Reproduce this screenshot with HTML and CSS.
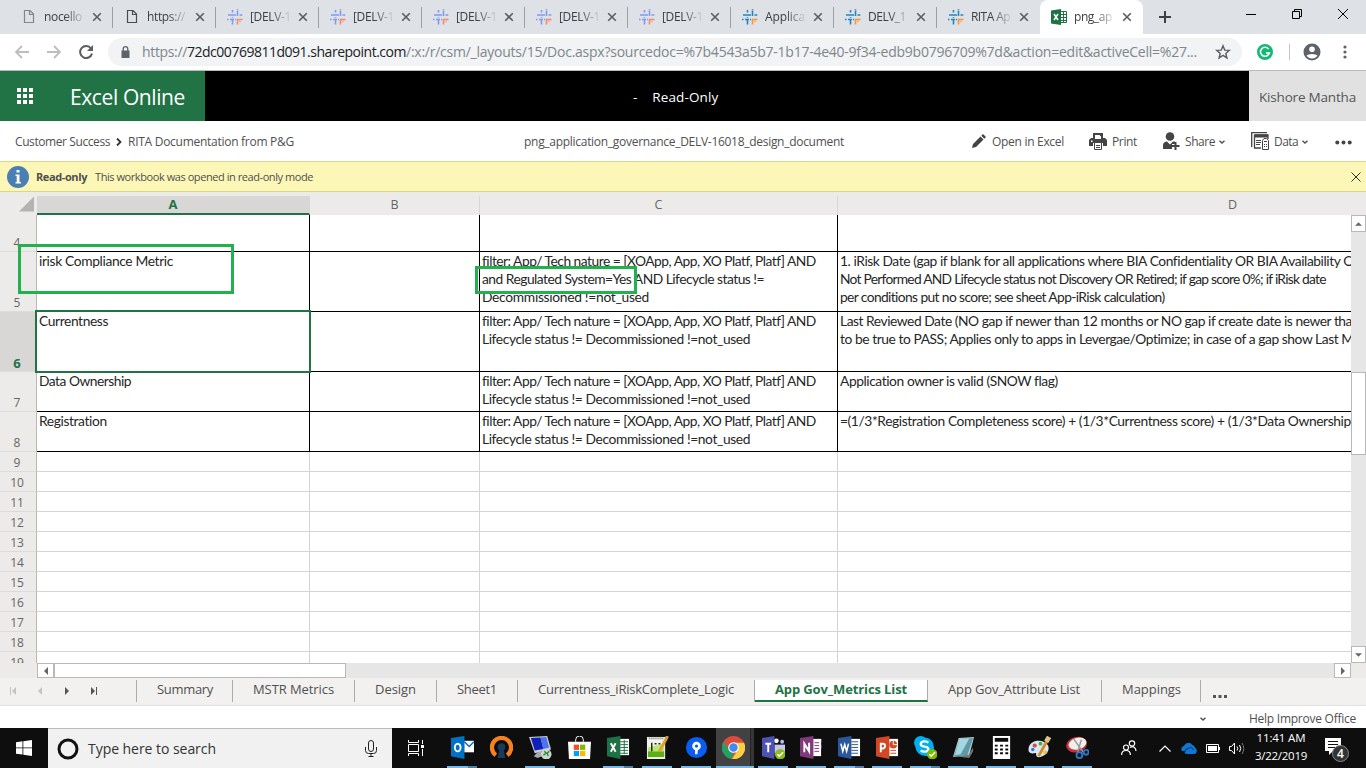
FILE: index.html
```html
<!DOCTYPE html>
<html lang="en">
<head>
<meta charset="utf-8">
<title>Excel Online</title>
<link rel="stylesheet" href="styles.css">
</head>
<body>
<svg class="defs" aria-hidden="true">
  <symbol id="page" viewBox="0 0 14 16"><path d="M2.500 1.500h5.500l3.500 3.500v8.500h-9zM7.500 1.500v4h4" fill="none" stroke="currentColor" stroke-width="1.200"/></symbol>
  <symbol id="hash" viewBox="0 0 16 16"><g fill="none" stroke="currentColor" stroke-width="1.600"><path d="M5.500 1v2.500M1 6h8M10.500 1.500v5.500M12.500 6h2.800M10.500 0v.8M0 10.500h1.500M3 10.500h4M5.500 10v5.500M8 10.500h1M5.500 8v.8"/><path d="M10.500 15.500v-5H15.500M12.500 12.500h1" class="accent"/></g></symbol>
  <symbol id="x" viewBox="0 0 10 10"><path d="M1.200 1.200l7.600 7.600M8.800 1.200L1.200 8.800" fill="none" stroke="currentColor" stroke-width="1.600"/></symbol>
  <symbol id="thinx" viewBox="0 0 10 10"><path d="M.5.5l9 9M9.500.5l-9 9" fill="none" stroke="currentColor" stroke-width="1"/></symbol>
  <symbol id="chev" viewBox="0 0 6 4"><path d="M.5.700L3 3 5.500.700" fill="none" stroke="currentColor" stroke-width="1.400"/></symbol>
  <symbol id="tri" viewBox="0 0 4 8"><path d="M0 0l4 4-4 4z" fill="currentColor"/></symbol>
</svg>

<div class="tabstrip">
  <div class="tab"><svg class="fav grey"><use href="#page"/></svg><span class="title"><span class="fit" data-w="38">nocello</span></span><svg class="close"><use href="#x"/></svg></div>
  <div class="tab"><svg class="fav grey dark"><use href="#page"/></svg><span class="title"><span class="fit" data-w="38">https://</span></span><svg class="close"><use href="#x"/></svg></div>
  <div class="tab"><svg class="fav pale"><use href="#hash"/></svg><span class="title"><span class="fit" data-w="41">[DELV-1</span></span><svg class="close"><use href="#x"/></svg></div>
  <div class="tab"><svg class="fav pale"><use href="#hash"/></svg><span class="title"><span class="fit" data-w="41">[DELV-1</span></span><svg class="close"><use href="#x"/></svg></div>
  <div class="tab"><svg class="fav pale"><use href="#hash"/></svg><span class="title"><span class="fit" data-w="41">[DELV-1</span></span><svg class="close"><use href="#x"/></svg></div>
  <div class="tab"><svg class="fav pale"><use href="#hash"/></svg><span class="title"><span class="fit" data-w="41">[DELV-1</span></span><svg class="close"><use href="#x"/></svg></div>
  <div class="tab"><svg class="fav pale"><use href="#hash"/></svg><span class="title"><span class="fit" data-w="41">[DELV-1</span></span><svg class="close"><use href="#x"/></svg></div>
  <div class="tab"><svg class="fav vivid"><use href="#hash"/></svg><span class="title"><span class="fit" data-w="40">Applica</span></span><svg class="close"><use href="#x"/></svg></div>
  <div class="tab"><svg class="fav vivid"><use href="#hash"/></svg><span class="title"><span class="fit" data-w="38">DELV_1</span></span><svg class="close"><use href="#x"/></svg></div>
  <div class="tab last"><svg class="fav vivid"><use href="#hash"/></svg><span class="title"><span class="fit" data-w="39">RITA Ap</span></span><svg class="close"><use href="#x"/></svg></div>
  <div class="tab active"><svg class="fav" viewBox="0 0 16 16"><path fill="#1f7244" d="M0 1.500L10 0v16L0 14.500z"/><path fill="none" stroke="#1f7244" d="M10 2.500h5.500v11H10M10 5.500h5M10 8.500h5M10 11.500h5M12.500 3v10"/><path d="M3 5l4 6M7 5l-4 6" stroke="#fff" stroke-width="1.500"/></svg><span class="title"><span class="fit" data-w="38">png_ap</span></span><svg class="close"><use href="#x"/></svg></div>
  <svg class="plus" viewBox="0 0 12 12"><path d="M6 0v12M0 6h12" stroke="#3c4043" stroke-width="2"/></svg>
  <div class="winbtns">
    <svg viewBox="0 0 10 10"><path d="M0 5.500h10" stroke="#000"/></svg>
    <svg viewBox="0 0 10 10"><path d="M.5 2.500h7v7h-7zM2.500 2.500v-2h7v7h-2" fill="none" stroke="#000"/></svg>
    <svg viewBox="0 0 10 10"><path d="M0 0l10 10M10 0L0 10" stroke="#000"/></svg>
  </div>
</div>

<div class="toolbar">
  <svg class="nav" viewBox="0 0 14 14"><path d="M14 7H1.500M7 1L1 7l6 6" fill="none" stroke="#bdbdbd" stroke-width="1.800"/></svg>
  <svg class="nav" viewBox="0 0 14 14"><path d="M0 7h12.500M7 1l6 6-6 6" fill="none" stroke="#bdbdbd" stroke-width="1.800"/></svg>
  <svg class="nav" viewBox="0 0 14 14"><path d="M12 3.500A6 6 0 1 0 13 8.500" fill="none" stroke="#5a5d61" stroke-width="2"/><path d="M14 0v6H8z" fill="#5a5d61"/></svg>
  <div class="omnibox">
    <svg class="lock" viewBox="0 0 9 12"><path d="M.5 4.500h8V12h-8z" fill="#5f6368"/><path d="M2.200 5V3a2.300 2.300 0 0 1 4.600 0v2" fill="none" stroke="#5f6368" stroke-width="1.300"/></svg>
    <span class="url"><span class="fit" data-w="45">https://</span><span class="fit host" data-w="219">72dc00769811d091.sharepoint.com</span><span class="fit" data-w="791">/:x:/r/csm/_layouts/15/Doc.aspx?sourcedoc=%7b4543a5b7-1b17-4e40-9f34-edb9b0796709%7d&amp;action=edit&amp;activeCell=%27...</span></span>
    <svg class="star" viewBox="0 0 16 16"><path d="M8 1.800l1.700 4.300 4.600.3-3.500 3 1.100 4.500L8 11.400l-3.900 2.500 1.100-4.500-3.500-3 4.600-.3z" fill="none" stroke="#5a5d61" stroke-width="1.400"/></svg>
  </div>
  <svg class="gram" viewBox="0 0 16 16"><circle cx="8" cy="8" r="8" fill="#15b877"/><path d="M11.500 5A4.500 4.500 0 1 0 12.300 9H9" fill="none" stroke="#fff" stroke-width="1.600"/></svg>
  <i class="bar"></i>
  <svg class="user" viewBox="0 0 18 18"><circle cx="9" cy="9" r="8.500" fill="#5f6368"/><circle cx="9" cy="6.300" r="2.800" fill="#fff"/><path d="M3.500 12.500a6.500 3.300 0 0 1 11 0 6.500 6.500 0 0 1-11 0" fill="#fff"/></svg>
  <svg class="more" viewBox="0 0 4 14"><g fill="#5f6368"><circle cx="2" cy="2" r="1.600"/><circle cx="2" cy="7" r="1.600"/><circle cx="2" cy="12" r="1.600"/></g></svg>
</div>

<header class="apphead">
  <div class="brand"><svg viewBox="0 0 16 16"><path fill="#fff" d="M0 0h4v4H0zM6 0h4v4H6zM12 0h4v4h-4zM0 6h4v4H0zM6 6h4v4H6zM12 6h4v4h-4zM0 12h4v4H0zM6 12h4v4H6zM12 12h4v4h-4z"/></svg><span class="fit" data-w="115">Excel Online</span></div>
  <div class="mode"><span>-</span><span class="fit" data-w="66">Read-Only</span></div>
  <div class="account"><span class="fit" data-w="97">Kishore Mantha</span></div>
</header>

<div class="cmdbar">
  <div class="crumbs"><span class="fit" data-w="95">Customer Success</span><svg viewBox="0 0 6 8"><path d="M1 .5L4.500 4 1 7.500" fill="none" stroke="#333" stroke-width="1.800"/></svg><span class="fit" data-w="166">RITA Documentation from P&amp;G</span></div>
  <div class="doc"><span class="fit" data-w="320">png_application_governance_DELV-16018_design_document</span></div>
  <div class="actions">
    <svg class="pencil" viewBox="0 0 14 14"><path fill="#444" d="M0 14l1-4 7.500-7.500 3 3L4 13zM9.300 1.700L11 0l3 3-1.700 1.700z"/></svg><span class="fit open" data-w="72">Open in Excel</span>
    <svg class="print" viewBox="0 0 18 17"><path fill="#444" d="M4 0h10v5h2l2 2v6h-4v-3H4v3H0V7l2-2h2z"/><path fill="#fff" d="M6 2h5v1h1v3H6zM2 7.500h1.500V9H2z"/><path d="M5.500 9.500h7v7h-7zM7 12.500h4M7 14.500h4" fill="#fff" stroke="#444"/></svg><span class="fit" data-w="25">Print</span>
    <svg class="share" viewBox="0 0 17 18"><circle cx="7" cy="4.500" r="4.300" fill="#444"/><path fill="#444" d="M0 17v-4c0-2 2-3.500 4-3.500l3 3 3-3h2V12H9v5z"/><path d="M12.500 10v8M8.500 14h8" stroke="#444" stroke-width="2"/></svg><span class="fit" data-w="30">Share</span><svg class="chev"><use href="#chev"/></svg>
    <svg class="data" viewBox="0 0 18 18"><path d="M.7 15V.7H16M3.500 3v13H10M3.500 3H17v4" fill="none" stroke="#444" stroke-width="1.300"/><path fill="#444" d="M3 2.500h14v3H3z"/><path d="M5 8.500h5M5 10.500h5M5 12.500h4" stroke="#444"/><path d="M11.500 8.500l1.500-2h2.500l2 2v9h-6z" fill="#fff" stroke="#444"/><path d="M13 9.500h3M13 12.500h1M15 12.500h1M13 14.500h1M15 14.500h1" stroke="#444"/></svg><span class="fit" data-w="24">Data</span><svg class="chev"><use href="#chev"/></svg>
    <svg class="dots" viewBox="0 0 17 5"><g fill="#444"><circle cx="2.300" cy="2.500" r="2"/><circle cx="8.500" cy="2.500" r="2"/><circle cx="14.700" cy="2.500" r="2"/></g></svg>
  </div>
</div>

<div class="notice">
  <svg class="info" viewBox="0 0 22 22"><circle cx="11" cy="11" r="11" fill="#4a7fb5"/><path fill="#fff" d="M9.500 4h3v2.500h-3zM8.500 8.500h4V16H14v1.500H8.500V16h1.200v-6H8.500z"/></svg>
  <b class="fit" data-w="51">Read-only</b><span class="fit" data-w="218">This workbook was opened in read-only mode</span>
  <svg class="dismiss"><use href="#thinx"/></svg>
</div>

<main class="sheet">
  <div class="colhead">
    <div class="corner"><svg viewBox="0 0 16 16"><path d="M16 0v16H0z" fill="#b3b3b3"/></svg></div>
    <div class="c sel">A</div><div class="c b">B</div><div class="c cc">C</div><div class="c d">D</div>
  </div>
  <div class="body">
    <div class="rows">
      <div class="row r4 ink"><div class="n">4</div><div></div><div></div><div></div><div></div></div>
      <div class="row r60 ink"><div class="n">5</div><div><p class="fit" data-w="134">irisk Compliance Metric</p></div><div></div><div><p class="fit" data-w="333">filter: App/ Tech nature = [XOApp, App, XO Platf, Platf] AND</p><p class="fit" data-w="282">and Regulated System=Yes AND Lifecycle status !=</p><p class="fit" data-w="167">Decommissioned !=not_used</p></div><div><p class="fit" data-w="514">1. iRisk Date (gap if blank for all applications where BIA Confidentiality OR BIA Availability O</p><p class="fit" data-w="486">Not Performed AND Lifecycle status not Discovery OR Retired; if gap score 0%; if iRisk date</p><p class="fit" data-w="325">per conditions put no score; see sheet App-iRisk calculation)</p></div></div>
      <div class="row r60 ink cur"><div class="n">6</div><div class="cell"><p class="fit" data-w="69">Currentness</p></div><div></div><div><p class="fit" data-w="333">filter: App/ Tech nature = [XOApp, App, XO Platf, Platf] AND</p><p class="fit" data-w="268">Lifecycle status != Decommissioned !=not_used</p></div><div><p class="fit" data-w="512">Last Reviewed Date (NO gap if newer than 12 months or NO gap if create date is newer tha</p><p class="fit" data-w="514">to be true to PASS; Applies only to apps in Levergae/Optimize; in case of a gap show Last M</p></div></div>
      <div class="row r40 ink"><div class="n">7</div><div><p class="fit" data-w="92">Data Ownership</p></div><div></div><div><p class="fit" data-w="333">filter: App/ Tech nature = [XOApp, App, XO Platf, Platf] AND</p><p class="fit" data-w="268">Lifecycle status != Decommissioned !=not_used</p></div><div><p class="fit" data-w="218">Application owner is valid (SNOW flag)</p></div></div>
      <div class="row r40 ink"><div class="n">8</div><div><p class="fit" data-w="68">Registration</p></div><div></div><div><p class="fit" data-w="333">filter: App/ Tech nature = [XOApp, App, XO Platf, Platf] AND</p><p class="fit" data-w="268">Lifecycle status != Decommissioned !=not_used</p></div><div><p class="fit" data-w="511">=(1/3*Registration Completeness score) + (1/3*Currentness score) + (1/3*Data Ownership</p></div></div>
      <div class="row"><div class="n">9</div><div></div><div></div><div></div><div></div></div>
      <div class="row"><div class="n">10</div><div></div><div></div><div></div><div></div></div>
      <div class="row"><div class="n">11</div><div></div><div></div><div></div><div></div></div>
      <div class="row"><div class="n">12</div><div></div><div></div><div></div><div></div></div>
      <div class="row"><div class="n">13</div><div></div><div></div><div></div><div></div></div>
      <div class="row"><div class="n">14</div><div></div><div></div><div></div><div></div></div>
      <div class="row"><div class="n">15</div><div></div><div></div><div></div><div></div></div>
      <div class="row"><div class="n">16</div><div></div><div></div><div></div><div></div></div>
      <div class="row"><div class="n">17</div><div></div><div></div><div></div><div></div></div>
      <div class="row"><div class="n">18</div><div></div><div></div><div></div><div></div></div>
      <div class="row"><div class="n">19</div><div></div><div></div><div></div><div></div></div>
    </div>
    <div class="vscroll"><div class="btn"><svg viewBox="0 0 8 4"><path d="M0 4l4-4 4 4z" fill="#666"/></svg></div><div class="thumb"></div><div class="btn end"><svg viewBox="0 0 8 4"><path d="M0 0l4 4 4-4z" fill="#666"/></svg></div></div>
    <div class="mark one"></div><div class="mark two"></div>
  </div>
  <div class="hscroll"><div class="hbtn"><svg class="flip"><use href="#tri"/></svg></div><div class="hthumb"></div><div class="hbtn end"><svg><use href="#tri"/></svg></div></div>
</main>

<nav class="sheettabs">
  <div class="steps"><svg class="off" viewBox="0 0 6 8"><path d="M.5 0v8" stroke="currentColor"/><path d="M6 0L2 4l4 4z" fill="currentColor"/></svg><svg class="off" viewBox="0 0 6 8"><path d="M5 0L1 4l4 4z" fill="currentColor"/></svg><svg viewBox="0 0 6 8"><path d="M1 0l4 4-4 4z" fill="currentColor"/></svg><svg viewBox="0 0 6 8"><path d="M5.500 0v8" stroke="currentColor"/><path d="M0 0l4 4-4 4z" fill="currentColor"/></svg></div>
  <div class="st w1"><span class="fit" data-w="56">Summary</span></div>
  <div class="st w2"><span class="fit" data-w="81">MSTR Metrics</span></div>
  <div class="st w3"><span class="fit" data-w="41">Design</span></div>
  <div class="st w4"><span class="fit" data-w="40">Sheet1</span></div>
  <div class="st w5"><span class="fit" data-w="196">Currentness_iRiskComplete_Logic</span></div>
  <div class="st w6 on"><span class="fit" data-w="132">App Gov_Metrics List</span></div>
  <div class="st w7"><span class="fit" data-w="132">App Gov_Attribute List</span></div>
  <div class="st w8"><span class="fit" data-w="59">Mappings</span></div>
  <svg class="ell" viewBox="0 0 14 3"><path d="M0 0h3v3H0zM5.500 0h3v3h-3zM11 0h3v3h-3z" fill="#555"/></svg>
</nav>
<footer class="status"><svg class="chev"><use href="#chev"/></svg><span class="fit" data-w="107">Help Improve Office</span></footer>

<div class="taskbar">
  <div class="start"><svg viewBox="0 0 16 16"><path fill="#fff" d="M0 2.200l6.500-.9v6.200H0zM7.300 1.200L16 0v7.500H7.300zM0 8.300h6.500v6.300L0 13.700zM7.300 8.300H16V16l-8.700-1.200z"/></svg></div>
  <div class="search"><svg class="cortana" viewBox="0 0 22 22"><circle cx="11" cy="11" r="9" fill="none" stroke="#111" stroke-width="3"/></svg><span class="fit" data-w="128">Type here to search</span><svg class="mic" viewBox="0 0 12 17"><rect x="3.500" y=".5" width="5" height="11" rx="2.500" fill="none" stroke="#222"/><path d="M.5 7v3.500a3 3 0 0 0 3 3h5a3 3 0 0 0 3-3V7M6 13.500v3M3.500 16.500h5" fill="none" stroke="#222"/></svg></div>
  <div class="tv"><svg viewBox="0 0 16 16"><path d="M.5 0v2.500h10V0M.5 16v-2.500h10V16M.5 4.500h10v7H.5zM14.500 0v4M14.500 9v7" fill="none" stroke="#fff"/><path fill="#fff" d="M13 5h3v3h-3z"/></svg></div>
  <div class="app run split"><svg viewBox="0 0 24 24"><path fill="#0072c6" d="M0 2l14-2v24L0 21z"/><path fill="#fff" d="M14 5h10v12H14z"/><path d="M14 6l5 5 5-5" stroke="#0072c6" fill="none" stroke-width="1.500"/><ellipse cx="7" cy="12" rx="3" ry="4" fill="none" stroke="#fff" stroke-width="2"/></svg></div>
  <div class="app"><svg viewBox="0 0 24 24"><path d="M6 20A10 10 0 1 1 18 20" fill="none" stroke="#f6821f" stroke-width="4.500"/><circle cx="12" cy="11.500" r="4" fill="#1a3a5c"/><path fill="#1a3a5c" d="M10 13h4l2 10H8z"/></svg></div>
  <div class="app run"><svg viewBox="0 0 24 24"><path fill="#c9cdd5" d="M0 1l19-1 4 14-17 4z"/><path fill="#1020b8" d="M2 2l10-.5 3 12L6 15z"/><path fill="#4b73ee" d="M12 1.500l6-.5 3 11-6 1.500z"/><path fill="#aaa" d="M9 17l6-1 1 4-7 3-4-2z"/><circle cx="18" cy="19" r="5.500" fill="#cdd5cd"/><path d="M15 20l3-2-2-2M21 16l-2 2 1 3" stroke="#26863c" fill="none" stroke-width="1.400"/></svg></div>
  <div class="app"><svg viewBox="0 0 24 24"><path d="M8 6V4a4 4 0 0 1 8 0v2" fill="none" stroke="#fff"/><path fill="#fff" d="M0 6h24l-1 18H1z"/><path fill="#f25022" d="M6 9h5.500v5.500H6z"/><path fill="#7fba00" d="M12.500 9H18v5.500h-5.500z"/><path fill="#00a4ef" d="M6 15.500h5.500V21H6z"/><path fill="#ffb900" d="M12.500 15.500H18V21h-5.500z"/></svg></div>
  <div class="app run split"><svg viewBox="0 0 24 24"><path fill="#fff" d="M12 3h11v17H12z"/><path d="M14 6h8M14 9h8M14 12h8M14 15h8M14 18h8M18 4v15" stroke="#1e7145"/><path fill="#1e7145" d="M0 2l14-2v24L0 21z"/><path d="M4 7.500l5 9M9 7.500l-5 9" stroke="#fff" stroke-width="2"/></svg></div>
  <div class="app run"><svg viewBox="0 0 24 24"><path fill="#f1f3ea" d="M1 1h19v23H1z"/><path fill="#b9e86a" d="M2 12l17-4v8H2z"/><path fill="#5cad18" d="M2 16h17v6H2z"/><path d="M3 2.500h15" stroke="#777" stroke-width="2" stroke-dasharray="1 1"/><path d="M6 7v9M9 8h2M13 8h2" stroke="#222" stroke-width="1.500"/><path d="M14 16l8-15" stroke="#e3a030" stroke-width="3"/><path d="M21 3l1.500-3" stroke="#c94" stroke-width="3"/></svg></div>
  <div class="app run"><svg viewBox="0 0 24 24"><circle cx="12" cy="12" r="11" fill="#0a5df0"/><circle cx="12" cy="10.500" r="4.500" fill="#fff"/><path fill="#fff" d="M10.500 13h3l-.5 6h-2.500z"/><circle cx="12" cy="10.500" r="1.700" fill="#0a5df0"/></svg></div>
  <div class="app run full"><svg viewBox="0 0 24 24"><circle cx="12" cy="12" r="12" fill="#dd4b3e"/><path fill="#1da462" d="M1.500 6L9 17l3 1-1.500 6A12 12 0 0 1 1.500 6"/><path fill="#ffcd42" d="M12 7h11A12 12 0 0 1 10.500 24L16 15z"/><circle cx="12" cy="12" r="5.500" fill="#fff"/><circle cx="12" cy="12" r="4.400" fill="#4688f1"/></svg></div>
  <div class="app run"><svg viewBox="0 0 24 24"><circle cx="15" cy="5" r="2.500" fill="#fff"/><circle cx="21" cy="6" r="2" fill="#bfc1ee"/><path fill="#c5c7f0" d="M13 9h11v9H13z"/><path fill="#4f52b2" d="M0 2l13-2v24L0 21z"/><path d="M3.500 8h6M6.500 8v9" stroke="#fff" stroke-width="2"/><circle cx="19" cy="19" r="5.500" fill="#8cbd18"/><path d="M16 19l2 2 4-4" stroke="#fff" fill="none" stroke-width="1.500"/></svg></div>
  <div class="app run"><svg viewBox="0 0 24 24"><path fill="#fff" d="M12 3h10v18H12z"/><path d="M15 7h5M15 10h5M15 13h5M15 16h5M22.500 3v4M22.500 9v4" stroke="#80397b"/><path fill="#80397b" d="M0 2l14-2v24L0 21z"/><path d="M4.500 17V8l5 8V7" stroke="#fff" fill="none" stroke-width="2"/></svg></div>
  <div class="app run split"><svg viewBox="0 0 24 24"><path fill="#fff" d="M12 3h11v18H12z"/><path d="M14 6h7M14 9h7M14 12h7M14 15h7M14 18h7" stroke="#2b579a"/><path fill="#2b579a" d="M0 2l14-2v24L0 21z"/><path d="M3 8l2 8 2-7 2 7 2-8" stroke="#fff" fill="none" stroke-width="1.600"/></svg></div>
  <div class="app run"><svg viewBox="0 0 24 24"><path fill="#fff" d="M12 3h11v18H12z"/><circle cx="18" cy="9" r="4" fill="#d24726"/><path d="M18 5v4h4" stroke="#fff" fill="none"/><path d="M15 15h6M15 18h6" stroke="#d24726"/><path fill="#d24726" d="M0 2l14-2v24L0 21z"/><path d="M5 17V8h2a2.500 2.500 0 0 1 0 5H5" stroke="#fff" fill="none" stroke-width="2"/></svg></div>
  <div class="app run split"><svg viewBox="0 0 24 24"><circle cx="7" cy="7" r="7" fill="#00aff0"/><circle cx="14" cy="14" r="7" fill="#00aff0"/><circle cx="11" cy="11" r="9.500" fill="#00aff0"/><path d="M15 7c-2-2-8-2-8 1.500C7 12 15 10 15 13.500S9 17 7 15" stroke="#fff" fill="none" stroke-width="2.400"/><circle cx="19" cy="19" r="5.500" fill="#7fba00"/><path d="M16 19l2 2 4-4" stroke="#fff" fill="none" stroke-width="1.500"/></svg></div>
  <div class="app run"><svg viewBox="0 0 24 24"><path fill="#b9ced4" d="M7 2l16-1-5 19-17 2z"/><path fill="#5d9aa8" d="M8 3l14-1-6 18-14 1z"/><path fill="#a6d6df" d="M8 3l10-.5L9 19l-6 1z"/><path fill="#777" d="M2 21l15-1 5-8v4l-4 7z"/></svg></div>
  <div class="app run"><svg viewBox="0 0 24 24"><path fill="#fff" d="M3 0h18v24H3z"/><path fill="#0c0c0c" d="M5 2h14v4H5z"/><path d="M5 10h14M5 14h14M5 18h14" stroke="#0c0c0c" stroke-width="2" stroke-dasharray="3 2.500"/></svg></div>
  <div class="app run"><svg viewBox="0 0 24 24"><path fill="#d8e8f4" d="M1 11C4 3 17 3 21 10c3 8-7 13-11 12-3-2 0-5-3-4-7 1-7-3-6-7"/><circle cx="7" cy="10" r="2.200" fill="#e34a3a"/><circle cx="13" cy="8" r="2" fill="#49a94d"/><circle cx="5" cy="14" r="1.800" fill="#3b74d1"/><circle cx="18" cy="17" r="2" fill="#e9c22c"/><path d="M11 21L20 5" stroke="#d48a2b" stroke-width="3"/><path d="M19 6l3-5" stroke="#dac28a" stroke-width="5"/></svg></div>
  <div class="app run"><svg viewBox="0 0 24 24"><ellipse cx="11" cy="9" rx="11" ry="8" transform="rotate(-15 11 9)" fill="#c5333a"/><ellipse cx="12" cy="8" rx="9.500" ry="6" transform="rotate(-15 12 8)" fill="#f3eeee"/><path d="M8 3l10 14M16 4l-4 13" stroke="#999" stroke-width="1.500"/><circle cx="14" cy="20" r="3" fill="none" stroke="#2e75c8" stroke-width="2"/><circle cx="21" cy="17" r="2.500" fill="none" stroke="#2e75c8" stroke-width="2"/></svg></div>
  <div class="tray">
    <svg class="people" viewBox="0 0 16 16"><g fill="none" stroke="#fff" stroke-width="1.200"><circle cx="5" cy="7.500" r="2.500"/><path d="M.6 15c0-6 8.800-6 8.800 0"/><circle cx="11" cy="3.500" r="2.700"/><path d="M9 7.500c3-2 6 0 6 3.500"/></g></svg>
    <svg class="up" viewBox="0 0 12 7"><path d="M.5 6.500L6 1l5.500 5.500" fill="none" stroke="#fff" stroke-width="1.200"/></svg>
    <svg class="cloud" viewBox="0 0 16 11"><path fill="#0b78d7" d="M1 8c-2-3 1-5 2-5 2-4 7-4 8-1 2 0 3 2 3 3 3 1 2 6-1 6H6C4 11 3 9 4 8z"/><path d="M4 9C4 5 7 6 7 6c2-3 5-1 5 1" fill="none" stroke="#0b1520" stroke-width=".8"/></svg>
    <svg class="batt" viewBox="0 0 15 9"><path d="M.5.5h12v8H.500zM13.500 3v3" fill="none" stroke="#fff"/><path fill="#fff" d="M2 2h9v5H2z"/></svg>
    <svg class="vol" viewBox="0 0 16 13"><path d="M.5 4.500h2l3-3.500v11l-3-3.500h-2z" fill="none" stroke="#fff"/><path d="M8 4.500q1.500 2 0 4M10.500 3q2.500 3.500 0 7" fill="none" stroke="#fff"/><path d="M13 1q3.500 5.500 0 11" fill="none" stroke="#777"/></svg>
    <div class="clock"><span class="fit" data-w="49">11:41 AM</span><span class="fit" data-w="52">3/22/2019</span></div>
    <svg class="action" viewBox="0 0 24 24"><path fill="#fff" d="M0 0h16v13H8l-4 4v-4H0z"/><path d="M3 3.500h10M3 6.500h10M3 9.500h7" stroke="#111"/><circle cx="15.500" cy="15.500" r="8" fill="#333" stroke="#888"/><text x="15.500" y="20" text-anchor="middle" class="badge">4</text></svg>
  </div>
</div>
<script src="fit.js"></script>
</body>
</html>
```
FILE: fit.js
```js
// Spaces the letters of each label so that it fills its nominal width.
document.querySelectorAll('.fit').forEach(function (el) {
  var range = document.createRange();
  range.selectNodeContents(el);
  var natural = range.getBoundingClientRect().width;
  var n = el.textContent.length;
  el.style.letterSpacing = ((Number(el.dataset.w) - natural) / n).toFixed(3) + 'px';
});
```
FILE: styles.css
```css
* { box-sizing: border-box; }
body { margin: 0; width: 1366px; height: 768px; overflow: hidden; background: #fff; color: #505050; font: 12px/16px "Open Sans", "Noto Sans", sans-serif; }
svg { display: block; flex: none; }
p { margin: 0; }
.defs { position: absolute; width: 0; height: 0; }
.fit { white-space: nowrap; font-variant-ligatures: none; }

.tabstrip { display: flex; height: 34px; padding-left: 10px; background: #dee1e6; }
.tab { display: flex; align-items: center; width: 103px; height: 34px; padding-left: 10px; border-right: 1px solid #9da1a6; border-image: linear-gradient(transparent 8px, #9da1a6 8px 27px, transparent 27px) 1; }
.tab.last { border-image: none; border-color: transparent; }
.tab.active { background: #fff; border: 0; border-radius: 8px 8px 0 0; }
.fav { width: 16px; height: 16px; margin-left: 1px; }
.grey { color: #80868b; }
.grey.dark { color: #4a4d50; }
.pale { color: #7f9af2; --accent: #f58a6c; }
.vivid { color: #2385be; --accent: #f79633; }
.accent { stroke: var(--accent); }
.title { width: 42px; margin-left: 7px; overflow: hidden; color: #3c4043; font-size: 12px; -webkit-mask-image: linear-gradient(90deg, #000 50%, transparent); mask-image: linear-gradient(90deg, #000 50%, transparent); }
.close { width: 10px; height: 10px; margin-left: 6px; color: #5a5d61; }
.plus { width: 12px; height: 12px; margin: 11px 0 0 16px; }
.winbtns { display: flex; gap: 36px; margin: 9px 18px 0 auto; }
.winbtns svg { width: 10px; height: 10px; }

.toolbar { display: flex; align-items: center; height: 37px; padding: 0 19px 1px 15px; border-bottom: 1px solid #b8babb; }
.nav { width: 14px; height: 14px; margin-right: 18px; }
.omnibox { display: flex; align-items: center; width: 1134px; height: 28px; margin-left: -3px; padding: 0 11px 0 13px; border-radius: 14px; background: #f1f3f4; }
.lock { width: 9px; height: 12px; }
.url { display: flex; margin-left: 12px; color: #80868b; font-size: 14px; line-height: 20px; }
.host { color: #202124; }
.star { width: 16px; height: 16px; margin-left: auto; }
.gram { width: 16px; height: 16px; margin-left: 15px; }
.bar { width: 1px; height: 16px; margin-left: 16px; background: #c5c8cb; }
.user { width: 18px; height: 18px; margin-left: 13px; }
.more { width: 4px; height: 14px; margin-left: auto; }

.apphead { display: flex; height: 50px; background: #000; color: #fff; }
.brand { display: flex; align-items: center; gap: 37px; width: 205px; padding-left: 17px; background: #217346; font-size: 21px; line-height: 28px; }
.brand svg { width: 16px; height: 16px; }
.brand .fit { padding-top: 2px; }
.mode { display: flex; gap: 15px; flex: 1; padding: 18px 0 0 428px; font-size: 13.500px; }
.account { width: 117px; padding: 18px 0 0 10px; background: #e1e1e1; color: #555; font-size: 13.500px; }

.cmdbar { display: flex; align-items: center; height: 40px; font-size: 12px; }
.crumbs { display: flex; align-items: center; width: 523px; padding-left: 15px; }
.crumbs svg { width: 6px; height: 8px; margin: 0 6px; }
.crumbs, .doc, .actions { height: 42px; padding-top: 2px; }
.doc { width: 449px; padding: 14px 0 0 1px; }
.actions { display: flex; align-items: center; flex: 1; }
.pencil { width: 14px; height: 14px; margin: -2px 6px 0 0; }
.open { margin-right: 25px; }
.print { width: 18px; height: 17px; margin: -2px 5px 0 0; }
.share { width: 17px; height: 18px; margin: -2px 5px 0 26px; }
.chev { width: 6px; height: 4px; margin-left: 4px; }
.data { width: 18px; height: 18px; margin: -2px 5px 0 26px; }
.dots { width: 17px; height: 5px; margin-left: auto; margin-right: 14px; }

.notice { display: flex; align-items: center; height: 31px; padding: 0 5px 0 7px; border-top: 1px solid #d8d68c; border-bottom: 1px solid #d8d68c; background: #fcf7b6; font-size: 11px; }
.info { width: 22px; height: 22px; margin-right: 7px; }
.notice b { margin-right: 8px; }
.dismiss { width: 10px; height: 10px; margin-left: auto; color: #333; }

.sheet { background: #ecebe9; }
.colhead { display: flex; height: 23px; padding-top: 4px; overflow: hidden; font-size: 12.500px; line-height: 18px; color: #666; text-align: center; }
.colhead > div { flex: none; }
.corner { width: 37px; padding-left: 19px; }
.corner svg { width: 15px; height: 16px; }
.c { height: 19px; border-right: 1px solid #d8d7d5; }
.sel { width: 273px; background: #d8d7d5; color: #217346; font-weight: 700; border-bottom: 2px solid #217346; font-size: 13px; line-height: 17px; }
.b { width: 170px; }
.cc { width: 358px; }
.d { width: 790px; }
.body { position: relative; display: flex; height: 448px; }
.rows { width: 1351px; overflow: hidden; }
.row { display: grid; grid-template-columns: 37px 273px 170px 358px 513px; height: 20px; }
.row > div { background: #fff; border-right: 1px solid #d4d4d4; border-bottom: 1px solid #d4d4d4; overflow: hidden; padding-left: 2px; }
.row > div:last-child { border-right: 0; }
.row p { width: 700px; font: 13.800px/18px Lato, "Open Sans", sans-serif; color: #262626; }
.row > .n { display: flex; align-items: flex-end; justify-content: center; padding: 0 2px 0 0; background: #ecebe9; color: #666; border-right-color: #b8b8b8; border-bottom-color: #dcdbd9; font-size: 12px; line-height: 16px; }
.ink > div:not(.n) { border-color: #000; }
.r4 { height: 37px; }
.r60 { height: 60px; }
.r40 { height: 40px; }
.row.cur > .n { background: #d8d7d5; color: #217346; font-size: 13px; font-weight: 700; }
.row > .cell { outline: 2px solid #217346; outline-offset: -1px; margin-left: -1px; padding-left: 3px; position: relative; }
.cur { position: relative; }
.row.cur > .cell { overflow: visible; margin-top: -1px; padding-top: 1px; }
.row.cur .cell p { width: 200px; }
.vscroll { display: flex; flex-direction: column; width: 15px; background: #e6e6e6; }
.btn { display: flex; align-items: center; justify-content: center; height: 17px; border: 1px solid #b8b8b8; background: #fff; }
.btn svg { width: 7px; height: 4px; }
.btn.end { margin-top: auto; }
.thumb { height: 83px; margin-top: 140px; border: 1px solid #b8b8b8; background: #fff; }
.mark { position: absolute; border: 3px solid #22b14c; }
.one { left: 18px; top: 29px; width: 216px; height: 50px; }
.two { left: 475px; top: 51px; width: 162px; height: 28px; }
.hscroll { display: flex; width: 1314px; height: 15px; margin-left: 37px; background: #e6e6e6; }
.hbtn { display: flex; align-items: center; justify-content: center; width: 17px; border: 1px solid #b8b8b8; background: #fff; color: #666; }
.hbtn svg { width: 4px; height: 8px; }
.hbtn.end { margin-left: auto; }
.flip { transform: scaleX(-1); }
.hthumb { width: 292px; border: 1px solid #b8b8b8; background: #fff; }

.sheettabs { display: flex; height: 28px; padding-top: 2px; background: #f2f1f0; border-bottom: 1px solid #e0e0e0; font-size: 13px; }
.steps { display: flex; gap: 21px; width: 137px; height: 22px; padding: 7px 0 0 10px; border-right: 1px solid #ababab; color: #555; }
.steps svg { width: 6px; height: 8px; }
.steps .off { color: #c4c4c4; }
.st { height: 22px; padding-left: 20px; border-right: 1px solid #ababab; line-height: 19px; }
.st.on { background: #fff; color: #217346; font-weight: 700; border-bottom: 2px solid #217346; }
.w1 { width: 96px; }
.w2 { width: 122px; }
.w3 { width: 82px; }
.w4 { width: 81px; }
.w5 { width: 237px; }
.w6 { width: 173px; }
.w7 { width: 174px; }
.w8 { width: 99px; }
.ell { width: 14px; height: 3px; margin: 15px 0 0 12px; }
.status { display: flex; align-items: center; justify-content: flex-end; height: 22px; padding: 3px 10px 0 0; background: #fff; }
.status .chev { margin-right: 43px; }

.taskbar { display: flex; height: 40px; background: #0e0e0e; color: #fff; }
.start { display: flex; align-items: center; justify-content: center; width: 48px; }
.start svg, .tv svg { width: 16px; height: 16px; }
.search { display: flex; align-items: center; width: 344px; padding: 0 15px 0 9px; border-top: 1px solid #bbb; background: #f1f1f1; color: #333; font-size: 14px; }
.cortana { width: 22px; height: 22px; margin-right: 9px; }
.mic { width: 12px; height: 17px; margin-left: auto; }
.tv { display: flex; align-items: center; width: 51px; padding-left: 16px; }
.app { display: flex; flex: none; justify-content: center; width: 39px; padding-top: 8px; }
.full, .full ~ .app { width: 38px; }
.app svg { width: 23px; height: 23px; }
.app.run { background: linear-gradient(#76b9ed, #76b9ed) 4px 38px / 30px 2px no-repeat; }
.app.split { background: linear-gradient(90deg, #76b9ed 21px, #4f81a8 21px) 4px 38px / 30px 2px no-repeat; }
.app.full { padding-right: 4px; background: linear-gradient(#76b9ed, #76b9ed) 0 38px / 38px 2px no-repeat, linear-gradient(90deg, #424242 34px, #222 34px 35px, #363636 35px); }
.tray { display: flex; align-items: center; flex: 1; }
.people { width: 16px; height: 16px; margin-left: 25px; }
.up { width: 12px; height: 7px; margin-left: 22px; }
.cloud { width: 16px; height: 11px; margin-left: 10px; }
.batt { width: 15px; height: 9px; margin-left: 9px; }
.vol { width: 16px; height: 13px; margin-left: 8px; }
.clock { display: flex; flex-direction: column; align-items: center; width: 60px; margin: -2px 0 0 6px; font-size: 11.500px; line-height: 18px; }
.action { width: 24px; height: 24px; margin: 4px 0 0 14px; }
.badge { fill: #fff; font: 600 12px "Open Sans", sans-serif; }
```
